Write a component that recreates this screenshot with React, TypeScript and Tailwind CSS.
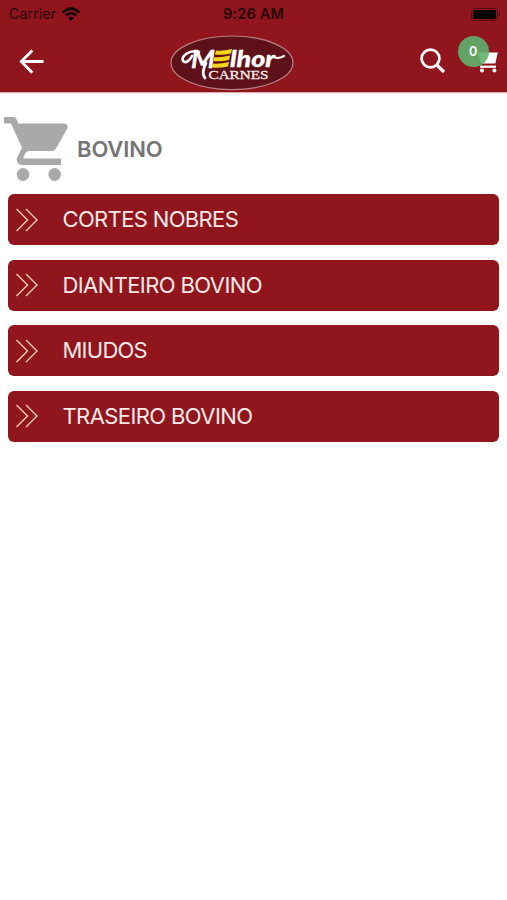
const categories = [
  { name: "CORTES NOBRES", spacing: "tracking-[-0.65px]" },
  { name: "DIANTEIRO BOVINO", spacing: "tracking-[-0.6px]" },
  { name: "MIUDOS", spacing: "tracking-[-0.75px]" },
  { name: "TRASEIRO BOVINO", spacing: "tracking-[-0.6px]" },
];

function Cart({ className }: { className: string }) {
  return (
    <svg viewBox="0 0 192 188" preserveAspectRatio="none" className={className} fill="currentColor" aria-hidden="true">
      <path d="M0 0H30Q34 0 36 4L43 19H181Q194 20 190 34L157 91Q152 100 142 100H75Q68 100 63 108L59 117Q57 122 63 122H171V141H58Q39 140 38 126Q38 121 41 115L54 90L21 19H0Z" />
      <circle cx="57" cy="169" r="19" />
      <circle cx="152" cy="169" r="19" />
    </svg>
  );
}

function SmallCart() {
  return (
    <svg viewBox="0 0 20 21" className="h-[21px] w-5" fill="#fff" aria-hidden="true">
      <path d="M0 .5H19.8L17.3 11.6H3Z" />
      <path d="M2 13.6H18V15.8H2Z" />
      <circle cx="4" cy="18.4" r="2" />
      <circle cx="16.4" cy="18.4" r="2" />
    </svg>
  );
}

function Wifi() {
  return (
    <svg viewBox="0 0 20 15" className="ml-[5px] h-[15px] w-5" fill="none" stroke="#160205" aria-hidden="true">
      <path d="M1.8 5.4Q10-2.2 18.2 5.4" strokeWidth="2.7" />
      <path d="M4.8 8.6Q10 3.7 15.2 8.6" strokeWidth="2.5" />
      <path d="M7.1 11Q10 8.4 12.9 11L10 14Z" fill="#160205" stroke="none" />
    </svg>
  );
}

function Logo() {
  return (
    <svg viewBox="0 0 124 56" className="h-14 w-[124px]" role="img" aria-label="Melhor Carnes">
      <ellipse cx="62" cy="27.8" rx="61" ry="26.8" fill="#5e1118" stroke="#b98286" strokeWidth="1.2" />
      <g fill="#fff" stroke="#fff" strokeWidth=".3" fontFamily="Lato, sans-serif" fontStyle="italic">
        <text x="21" y="32.5" textLength="24" lengthAdjust="spacingAndGlyphs" fontSize="24" fontWeight="700">M</text>
        <text x="60" y="32" textLength="45" lengthAdjust="spacingAndGlyphs" fontSize="22" fontWeight="900">lhor</text>
      </g>
      <g fill="none" stroke="#fff" strokeLinecap="round" strokeLinejoin="round">
        <path d="M29 17C20 14 11 21 13 26C16 29 20 25 22 21" strokeWidth="2.6" />
        <path d="M36 28C32.5 35 32.5 40 35 43" strokeWidth="2.8" />
        <path d="M103 21Q107 25 114 21" strokeWidth="2.2" />
      </g>
      <g fill="#f2d51c">
        <path d="M46 15.5Q52 16.5 62 14L61 18.5Q52 20.5 45 19.5Z" />
        <path d="M44.5 22Q50 23 60 20.5L59 25Q50 27 43.5 26Z" />
        <path d="M43 28.5Q49 29.5 59 27L58 31.5Q49 33.5 42 32.5Z" />
      </g>
      <text x="38.5" y="43.5" fill="#f5e9ea" stroke="#f5e9ea" strokeWidth=".3" fontFamily="Liberation Serif, serif" fontSize="11.5" textLength="60" lengthAdjust="spacingAndGlyphs">CARNES</text>
    </svg>
  );
}

export default function App() {
  return (
    <div className="min-h-[900px] w-full bg-white font-['Inter',sans-serif]">
      <header className="h-[92px] bg-[#90151d] shadow-[0_1px_1px_#dcaeb0]">
        <div className="grid h-7 grid-cols-3 items-center text-[#26050a]">
          <div className="flex items-center pl-[9px] text-[14px] leading-[18px] tracking-[0.2px]">
            <span>Carrier</span>
            <Wifi />
          </div>
          <div className="text-center text-[14.5px] font-semibold leading-[18px] tracking-[0.15px] text-[#230408]">9:26 AM</div>
          <div className="flex items-center justify-end pr-[7px]">
            <div className="h-[13px] w-[27px] rounded-[4px] border border-[#590c12] p-px">
              <div className="h-full w-[23px] rounded-[2px] bg-black" />
            </div>
            <div className="ml-px h-1 w-px bg-[#590c12]" />
          </div>
        </div>
        <div className="flex h-16 items-start">
          <button className="ml-[19px] mt-[21px] w-[151px]" aria-label="Voltar">
            <svg viewBox="0 0 26 26" className="size-[26px]" fill="none" stroke="#fff" strokeWidth="2.8" aria-hidden="true">
              <path d="M24.5 12.5H2.5M13.3 1.5L2.3 12.5L13.3 23.8" />
            </svg>
          </button>
          <div className="mt-[7px] w-[124px] shrink-0">
            <Logo />
          </div>
          <button className="ml-[126px] mt-5" aria-label="Buscar">
            <svg viewBox="0 0 26 26" className="size-[26px]" fill="none" stroke="#fff" aria-hidden="true">
              <circle cx="10.5" cy="10.5" r="8.9" strokeWidth="2.7" />
              <path d="M16.8 16.8L24 24" strokeWidth="3.2" />
            </svg>
          </button>
          <button className="relative ml-[32px] mt-[24px] text-white" aria-label="Carrinho">
            <SmallCart />
            <span className="absolute -left-5 -top-4 flex size-[31px] items-center justify-center rounded-full bg-[#60b16f]/90 pr-px pt-[2px] text-[12.5px] font-semibold">0</span>
          </button>
        </div>
      </header>
      <main>
        <div className="flex h-[102px] items-start">
          <Cart className="ml-1 mt-[25px] h-16 w-16 text-[#a9a9a9]" />
          <h1 className="ml-[9px] mt-[41px] text-[22px] font-semibold leading-8 tracking-[-0.1px] text-[#757575]">BOVINO</h1>
        </div>
        <ul className="flex flex-col gap-[14.6px] px-2">
          {categories.map((category) => (
            <li key={category.name} className="flex h-[51px] items-center rounded-[6px] bg-[#90151d] pl-2">
              <svg viewBox="0 0 22 24" className="h-6 w-[22px]" fill="none" stroke="#f3cfae" strokeWidth="1.4" aria-hidden="true">
                <path d="M.5 1L11.5 12L.5 23M10 1L21 12L10 23" />
              </svg>
              <span className={`ml-[24.5px] text-[22px] text-[#fbe9e7] ${category.spacing}`}>{category.name}</span>
            </li>
          ))}
        </ul>
      </main>
    </div>
  );
}
